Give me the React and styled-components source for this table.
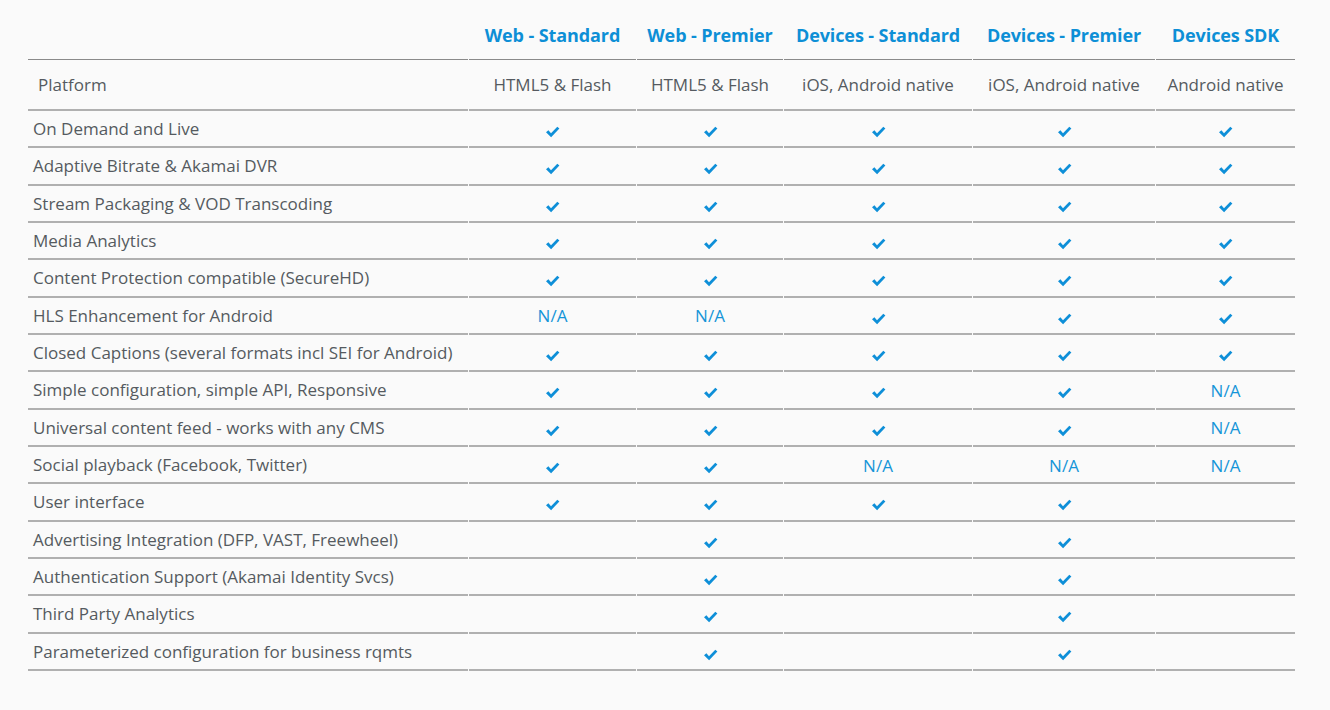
import React from "react";
import styled, { createGlobalStyle } from "styled-components";

const Global = createGlobalStyle`
  html, body { margin: 0; padding: 0; background: #fafafa; }
  body { font-family: "Open Sans", "Noto Sans", sans-serif; }
`;

const Page = styled.div`
  padding: 0 34px 0 27px;
  height: 710px;
  box-sizing: border-box;
  background: #fafafa;
`;

const Table = styled.table`
  border-collapse: separate;
  border-spacing: 1px 0;
  table-layout: fixed;
  width: 1269px;
  color: #555a60;
  font-size: 17px;
`;

const HeadCell = styled.th`
  height: 60px;
  box-sizing: border-box;
  padding: 0 0 12px;
  vertical-align: bottom;
  text-align: center;
  color: #0d8fd6;
  font-weight: 700;
  font-size: 18px;
  white-space: nowrap;
  border-bottom: 1px solid #8a8a8a;
  letter-spacing: -0.1px;
`;

const Row = styled.tr``;

const Label = styled.td`
  height: ${(p) => (p.$tall ? "51px" : "37.33px")};
  box-sizing: border-box;
  padding: 0 0 0 ${(p) => (p.$tall ? "10px" : "5px")};
  border-bottom: 2px solid #b0b0b0;
  white-space: nowrap;
  vertical-align: middle;
`;

const Cell = styled.td`
  height: ${(p) => (p.$tall ? "51px" : "37.33px")};
  box-sizing: border-box;
  padding: ${(p) => (p.$tall ? "0" : "3px 0 0")};
  border-bottom: 2px solid #b0b0b0;
  text-align: center;
  vertical-align: middle;
  white-space: nowrap;
`;

const NA = styled.span`
  color: #1595d8;
  font-size: 17px;
  position: relative;
  top: -1px;
`;

const Check = () => (
  <svg width="15" height="12" viewBox="0 0 15 12" style={{ display: "inline-block", verticalAlign: "middle" }}>
    <path d="M1 6.2 L3.4 4.3 L6 7.2 L12.3 0.8 L14.4 2.6 L6.1 11.2 Z" fill="#0e8fd8" />
  </svg>
);

const cols = [
  { name: "Web - Standard", w: 167 },
  { name: "Web - Premier", w: 146 },
  { name: "Devices - Standard", w: 188 },
  { name: "Devices - Premier", w: 182 },
  { name: "Devices SDK", w: 139 },
];

const Y = "y";
const N = "n";
const rows = [
  ["On Demand and Live", [Y, Y, Y, Y, Y]],
  ["Adaptive Bitrate & Akamai DVR", [Y, Y, Y, Y, Y]],
  ["Stream Packaging & VOD Transcoding", [Y, Y, Y, Y, Y]],
  ["Media Analytics", [Y, Y, Y, Y, Y]],
  ["Content Protection compatible (SecureHD)", [Y, Y, Y, Y, Y]],
  ["HLS Enhancement for Android", [N, N, Y, Y, Y]],
  ["Closed Captions (several formats incl SEI for Android)", [Y, Y, Y, Y, Y]],
  ["Simple configuration, simple API, Responsive", [Y, Y, Y, Y, N]],
  ["Universal content feed - works with any CMS", [Y, Y, Y, Y, N]],
  ["Social playback (Facebook, Twitter)", [Y, Y, N, N, N]],
  ["User interface", [Y, Y, Y, Y, ""]],
  ["Advertising Integration (DFP, VAST, Freewheel)", ["", Y, "", Y, ""]],
  ["Authentication Support (Akamai Identity Svcs)", ["", Y, "", Y, ""]],
  ["Third Party Analytics", ["", Y, "", Y, ""]],
  ["Parameterized configuration for business rqmts", ["", Y, "", Y, ""]],
];

export default function App() {
  return (
    <Page>
      <Global />
      <Table>
        <colgroup>
          <col style={{ width: 440 }} />
          {cols.map((c) => (
            <col key={c.name} style={{ width: c.w }} />
          ))}
        </colgroup>
        <thead>
          <tr>
            <HeadCell />
            {cols.map((c) => (
              <HeadCell key={c.name}>{c.name}</HeadCell>
            ))}
          </tr>
        </thead>
        <tbody>
          <Row>
            <Label $tall>Platform</Label>
            <Cell $tall>HTML5 &amp; Flash</Cell>
            <Cell $tall>HTML5 &amp; Flash</Cell>
            <Cell $tall>iOS, Android native</Cell>
            <Cell $tall>iOS, Android native</Cell>
            <Cell $tall>Android native</Cell>
          </Row>
          {rows.map(([label, vals]) => (
            <Row key={label}>
              <Label>{label}</Label>
              {vals.map((v, i) => (
                <Cell key={i}>{v === Y ? <Check /> : v === N ? <NA>N/A</NA> : null}</Cell>
              ))}
            </Row>
          ))}
        </tbody>
      </Table>
    </Page>
  );
}
